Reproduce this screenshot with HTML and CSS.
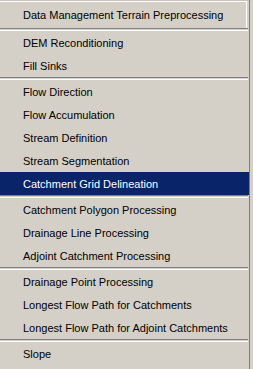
FILE: index.html
```html
<!DOCTYPE html>
<html lang="en">
<head>
    <meta charset="UTF-8">
    <title>Hydro menu</title>
    <link rel="stylesheet" href="styles.css">
</head>
<body>
    <div class="menu">
        <div class="item title">Data Management Terrain Preprocessing</div>
        <div class="sep"></div>
        <div class="item">DEM Reconditioning</div>
        <div class="item">Fill Sinks</div>
        <div class="sep"></div>
        <div class="item">Flow Direction</div>
        <div class="item">Flow Accumulation</div>
        <div class="item">Stream Definition</div>
        <div class="item">Stream Segmentation</div>
        <div class="item active">Catchment Grid Delineation</div>
        <div class="sep"></div>
        <div class="item">Catchment Polygon Processing</div>
        <div class="item">Drainage Line Processing</div>
        <div class="item">Adjoint Catchment Processing</div>
        <div class="sep"></div>
        <div class="item">Drainage Point Processing</div>
        <div class="item">Longest Flow Path for Catchments</div>
        <div class="item">Longest Flow Path for Adjoint Catchments</div>
        <div class="sep"></div>
        <div class="item">Slope</div>
    </div>
</body>
</html>
```

FILE: styles.css
```css
*{
    margin: 0;
    padding: 0;
    box-sizing: border-box;
}
body{
    background: #d4d0c8;
    font-family: "Liberation Sans", Arial, sans-serif;
    font-size: 11px;
    color: #000;
    width: 253px;
    height: 369px;
    overflow: hidden;
}
.menu{
    width: 250px;
    padding-top: 2px;
    border-right: 1px solid #808080;
    box-shadow: inset 0 1px 0 #c8c4bc;
    min-height: 369px;
    display: flex;
    flex-direction: column;
}
.item{
    height: 23px;
    display: flex;
    align-items: center;
    padding-left: 23px;
    white-space: nowrap;
}
.item.title{
    height: 27px;
    border-top: 1px solid #fff;
    border-right: 1px solid #fff;
    margin-top: -1px;
    margin-right: 2px;
}
.item.active{
    background: #0a246a;
    color: #fff;
}
.sep{
    height: 3px;
    border-top: 1px solid #808080;
    border-bottom: 1px solid #fff;
    margin-right: 1px;
}
```
